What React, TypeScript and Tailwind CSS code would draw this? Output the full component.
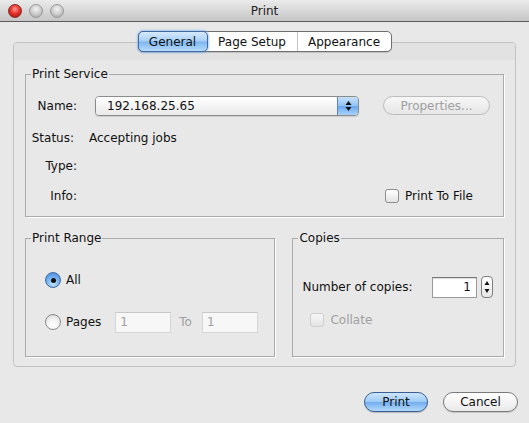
import React from "react";

const font = { fontFamily: '"Lucida Grande", "DejaVu Sans", "Liberation Sans", sans-serif' };

function Light({ color }: { color: "red" | "gray" }) {
  const cls =
    color === "red"
      ? "bg-[radial-gradient(circle_at_50%_35%,#ff9a93_0%,#e8322b_45%,#9c0f0b_100%)] border-[#8a2a25]"
      : "bg-[radial-gradient(circle_at_50%_35%,#f4f4f4_0%,#c9c9c9_55%,#9b9b9b_100%)] border-[#9a9a9a]";
  return <div className={`w-[14px] h-[14px] rounded-full border ${cls}`} />;
}

function Checkbox({ disabled }: { disabled?: boolean }) {
  return (
    <div
      className={`w-[14px] h-[14px] rounded-[3px] border bg-gradient-to-b from-white to-[#e3e3e3] ${
        disabled ? "border-[#c4c4c4] opacity-70" : "border-[#8d8d8d]"
      }`}
    />
  );
}

function Radio({ checked }: { checked?: boolean }) {
  if (checked) {
    return (
      <div className="w-[16px] h-[16px] rounded-full border border-[#3f6ca8] bg-[radial-gradient(circle_at_50%_75%,#c9e6ff_0%,#7ab4ef_45%,#3d84db_100%)] flex items-center justify-center">
        <div className="w-[5px] h-[5px] rounded-full bg-[#111]" />
      </div>
    );
  }
  return (
    <div className="w-[16px] h-[16px] rounded-full border border-[#8a8a8a] bg-[radial-gradient(circle_at_50%_75%,#ffffff_0%,#f2f2f2_50%,#d2d2d2_100%)]" />
  );
}

function Group({
  title,
  className,
  children,
}: {
  title: string;
  className?: string;
  children: React.ReactNode;
}) {
  return (
    <fieldset
      className={`border border-[#aaaaaa] shadow-[1px_1px_0_#ffffff] m-0 p-0 min-w-0 ${className ?? ""}`}
    >
      <legend className="ml-[5px] px-[1px] text-[12px] leading-[15px] text-[#111]">{title}</legend>
      {children}
    </fieldset>
  );
}

function DisabledField() {
  return (
    <div className="w-[56px] h-[21px] border border-[#d6d6d6] border-t-[#c8c8c8] bg-[#f7f7f7] px-[4px] flex items-center text-[#a0a0a0]">
      1
    </div>
  );
}

export default function App() {
  return (
    <div className="w-[529px] h-[423px] bg-[#e8e8e8] overflow-hidden flex flex-col text-[12px] text-[#111]" style={font}>
      {/* Title bar */}
      <div className="relative h-[22px] bg-gradient-to-b from-[#ebebeb] to-[#c6c6c6] border-b border-[#5c5c5c] flex items-center pl-[8px] gap-[7px] shrink-0">
        <Light color="red" />
        <Light color="gray" />
        <Light color="gray" />
        <div className="absolute inset-0 flex items-center justify-center text-[12px] text-[#222] pointer-events-none">
          Print
        </div>
      </div>

      {/* Tabs */}
      <div className="relative z-10 mt-[9px] flex justify-center">
        <div className="flex h-[21px] rounded-[5px] border border-[#6e6e6e] bg-white shadow-[0_1px_1px_rgba(0,0,0,0.15)]">
          <div className="w-[70px] -my-[1px] -ml-[1px] rounded-[5px] border border-[#3f6aa6] bg-[linear-gradient(to_bottom,#d5e9fd_0%,#a7d0f8_48%,#7db5f0_52%,#b7dcfc_100%)] shadow-[0_0_3px_#5b9be8] flex items-center justify-center text-[#111]">
            General
          </div>
          <div className="w-[90px] border-r border-[#c4c4c4] flex items-center justify-center">Page Setup</div>
          <div className="w-[93px] flex items-center justify-center">Appearance</div>
        </div>
      </div>

      {/* Panel */}
      <div className="-mt-[10px] mx-[13px] h-[325px] rounded-[4px] border border-[#c2c2c2] bg-[#e8e8e8] flex flex-col overflow-hidden">
        <div className="h-[17px] bg-[#e2e2e2] shrink-0" />
        <div className="px-[11px] flex flex-col">
          {/* Print Service */}
          <Group title="Print Service" className="mt-[7px] h-[150px]">
            <div className="flex flex-col">
              <div className="mt-[13px] flex items-center h-[21px]">
                <div className="w-[51px] text-right">Name:</div>
                <div className="ml-[18px] w-[264px] h-[20px] rounded-[4px] border border-[#8c8c8c] flex overflow-hidden shadow-[0_1px_1px_rgba(0,0,0,0.12)]">
                  <div className="flex-1 bg-gradient-to-b from-white to-[#e9e9e9] pl-[11px] flex items-center">
                    192.168.25.65
                  </div>
                  <div className="w-[21px] border-l border-[#5d82b8] bg-[linear-gradient(to_bottom,#c6e1fb_0%,#92c3f4_50%,#6aa9ed_52%,#a9d2fb_100%)] flex items-center justify-center">
                    <svg width="7" height="12" viewBox="0 0 7 12">
                      <path d="M3.5 1 L6.5 5 L0.5 5 Z" fill="#111" />
                      <path d="M3.5 11 L6.5 7 L0.5 7 Z" fill="#111" />
                    </svg>
                  </div>
                </div>
                <div className="ml-[24px] w-[107px] h-[19px] rounded-full border border-[#bdbdbd] bg-gradient-to-b from-[#f7f7f7] to-[#e6e6e6] flex items-center justify-center text-[#a0a0a0]">
                  Properties...
                </div>
              </div>
              <div className="mt-[12px] flex items-center h-[20px]">
                <div className="w-[48px] text-right">Status:</div>
                <div className="ml-[15px]">Accepting jobs</div>
              </div>
              <div className="mt-[8px] flex items-center h-[20px]">
                <div className="w-[51px] text-right">Type:</div>
              </div>
              <div className="mt-[10px] flex items-center h-[20px]">
                <div className="w-[51px] text-right">Info:</div>
                <div className="flex-1" />
                <div className="flex items-center gap-[6px] mr-[30px]">
                  <Checkbox />
                  <span>Print To File</span>
                </div>
              </div>
            </div>
          </Group>

          <div className="mt-[14px] flex gap-[17px]">
            {/* Print Range */}
            <Group title="Print Range" className="w-[251px] h-[126px]">
              <div className="flex flex-col pl-[19px]">
                <div className="mt-[26px] flex items-center gap-[5px] h-[16px]">
                  <Radio checked />
                  <span>All</span>
                </div>
                <div className="mt-[23px] flex items-center h-[22px]">
                  <Radio />
                  <span className="ml-[5px]">Pages</span>
                  <div className="ml-[14px]">
                    <DisabledField />
                  </div>
                  <span className="ml-[8px] text-[#a0a0a0]">To</span>
                  <div className="ml-[10px]">
                    <DisabledField />
                  </div>
                </div>
              </div>
            </Group>

            {/* Copies */}
            <Group title="Copies" className="w-[212px] h-[126px]">
              <div className="flex flex-col">
                <div className="mt-[30px] pl-[9px] flex items-center h-[22px]">
                  <span>Number of copies:</span>
                  <div className="ml-auto w-[45px] h-[21px] border border-[#9a9a9a] border-t-[#777] bg-white shadow-[inset_0_1px_1px_rgba(0,0,0,0.15)] flex items-center justify-end pr-[5px]">
                    1
                  </div>
                  <div className="ml-[4px] mr-[10px] w-[12px] h-[22px] rounded-[4px] border border-[#7f7f7f] bg-gradient-to-b from-white to-[#e6e6e6] flex flex-col items-center justify-center">
                    <svg width="6" height="16" viewBox="0 0 6 16">
                      <path d="M3 2 L5.5 6 L0.5 6 Z" fill="#111" />
                      <path d="M3 14 L5.5 10 L0.5 10 Z" fill="#111" />
                    </svg>
                  </div>
                </div>
                <div className="mt-[15px] pl-[17px] flex items-center gap-[6px] h-[14px] text-[#a0a0a0]">
                  <Checkbox disabled />
                  <span>Collate</span>
                </div>
              </div>
            </Group>
          </div>
        </div>
      </div>

      {/* Buttons */}
      <div className="mt-[25px] flex justify-end gap-[15px] pr-[11px]">
        <div className="w-[64px] h-[20px] rounded-full border border-[#3a5f96] bg-[linear-gradient(to_bottom,#cde5fc_0%,#9dcbf6_48%,#72aeef_52%,#b4dafc_100%)] shadow-[0_1px_1px_rgba(0,0,0,0.2)] flex items-center justify-center text-[#111]">
          Print
        </div>
        <div className="w-[75px] h-[20px] rounded-full border border-[#7a7a7a] bg-gradient-to-b from-white to-[#e9e9e9] shadow-[0_1px_1px_rgba(0,0,0,0.15)] flex items-center justify-center text-[#111]">
          Cancel
        </div>
      </div>
    </div>
  );
}
